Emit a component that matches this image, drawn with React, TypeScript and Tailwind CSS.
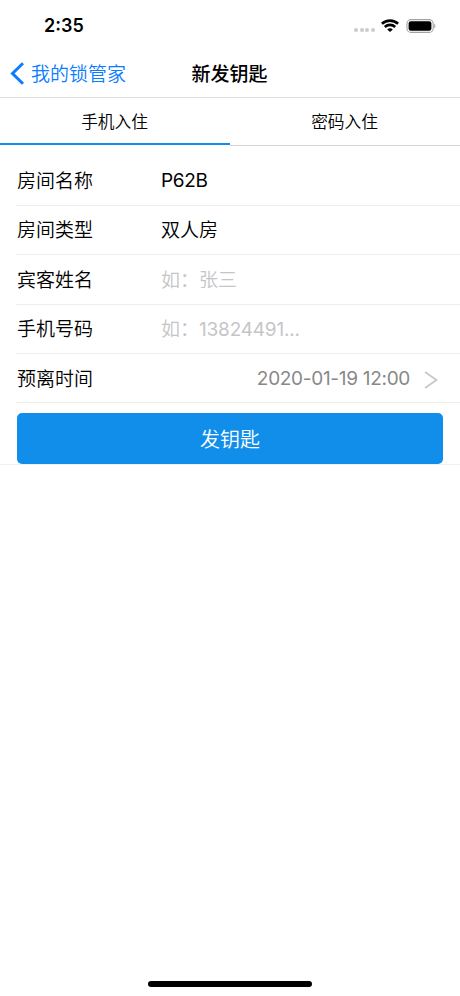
import { FC, ReactNode } from 'react';

const StatusIcons: FC = () => (
	<div className="flex items-center">
		<div className="mt-[9px] mr-[6px] flex gap-[1.7px]">
			<span className="size-1 rounded-full bg-[#cbcbcb]" />
			<span className="size-1 rounded-full bg-[#cbcbcb]" />
			<span className="size-1 rounded-full bg-[#cbcbcb]" />
			<span className="size-1 rounded-full bg-[#cbcbcb]" />
		</div>
		<svg className="mr-[7px] h-[13px] w-[18px]" viewBox="0 0 18 13" fill="none" stroke="black" strokeWidth="2.6">
			<path d="M0.9 4.8C5.4 0.5 12.6 0.5 17.1 4.8" />
			<path d="M3.8 8C6.8 5.2 11.2 5.2 14.2 8" />
			<path d="M6.2 10.4C7.8 8.9 10.2 8.9 11.8 10.4L9 13Z" fill="black" stroke="none" />
		</svg>
		<svg className="h-[14px] w-[30px]" viewBox="0 0 30 14" fill="none">
			<rect x="1" y="0.6" width="26.2" height="12.8" rx="4" stroke="#a3a3a3" strokeWidth="1.1" />
			<rect x="2.6" y="2.2" width="22.8" height="9.6" rx="2.3" fill="black" />
			<path d="M28.2 4.8C29.9 5.6 29.9 8.4 28.2 9.2Z" fill="#a3a3a3" />
		</svg>
	</div>
);

interface RowProps {
	label: string;
	children: ReactNode;
}

const Row: FC<RowProps> = ({ label, children }) => (
	<div className="ml-4 flex h-[49.4px] items-center border-b border-[#eeeeee] pt-[3px] pl-px">
		<span className="w-36 shrink-0">{label}</span>
		{children}
	</div>
);

const App: FC = () => {
	return (
		<div className="flex h-[996px] w-[460px] flex-col bg-white font-['Inter','Noto_Sans_CJK_SC',sans-serif] text-[19px] leading-6 font-[350] text-black">
			<header className="border-b border-[#dcdcde]">
				<div className="flex h-[49px] items-center justify-between pt-[2px] pr-[24px] pl-[44px]">
					<span className="text-[18px] font-semibold">2:35</span>
					<StatusIcons />
				</div>
				<nav className="grid h-12 grid-cols-[1fr_auto_1fr] items-center pl-[10px]">
					<button className="flex items-center gap-[7px] text-[#0a7cff]">
						<svg className="h-[23px] w-[14px]" viewBox="0 0 14 23" fill="none" stroke="currentColor" strokeWidth="3">
							<path d="M13 1.2L2.5 11.5L13 21.8" />
						</svg>
						<span className="pt-[3px]">我的锁管家</span>
					</button>
					<h1 className="-translate-x-[5.5px] pt-[3px] font-medium">新发钥匙</h1>
				</nav>
			</header>

			<div className="flex h-12 text-[16.7px]">
				<button className="h-[47px] w-1/2 border-b-2 border-[#198be5] pt-[2px] pr-px">手机入住</button>
				<button className="w-1/2 border-b border-[#d2d4d7] pr-px">密码入住</button>
			</div>

			<main className="border-b border-[#f1f1f1] pt-[10.4px]">
				<Row label="房间名称">
					<span className="pb-[2px] font-normal tracking-[-0.3px]">P62B</span>
				</Row>
				<Row label="房间类型">双人房</Row>
				<Row label="宾客姓名">
					<span className="text-[#c5c5c8]">如：张三</span>
				</Row>
				<Row label="手机号码">
					<span className="text-[#c5c5c8]">
						如：<span className="font-normal tracking-[-0.2px]">13824491...</span>
					</span>
				</Row>
				<Row label="预离时间">
					<span className="ml-auto pb-px font-normal tracking-[-0.3px] text-[#888888]">2020-01-19 12:00</span>
					<svg className="mr-[22px] ml-[14px] h-[18px] w-[14px]" viewBox="0 0 14 18" fill="none" stroke="#c7c7c9" strokeWidth="1.8">
						<path d="M1 1L12.5 9L1 17" />
					</svg>
				</Row>
				<div className="px-[17px] pt-[9.6px]">
					<button className="h-[51px] w-full rounded-[5px] bg-[#108ee9] pt-[3px] text-[20px] text-white">发钥匙</button>
				</div>
			</main>

			<div className="mx-auto mt-auto mb-[9px] h-[6px] w-[164px] rounded-full bg-black" />
		</div>
	);
};

export default App;
